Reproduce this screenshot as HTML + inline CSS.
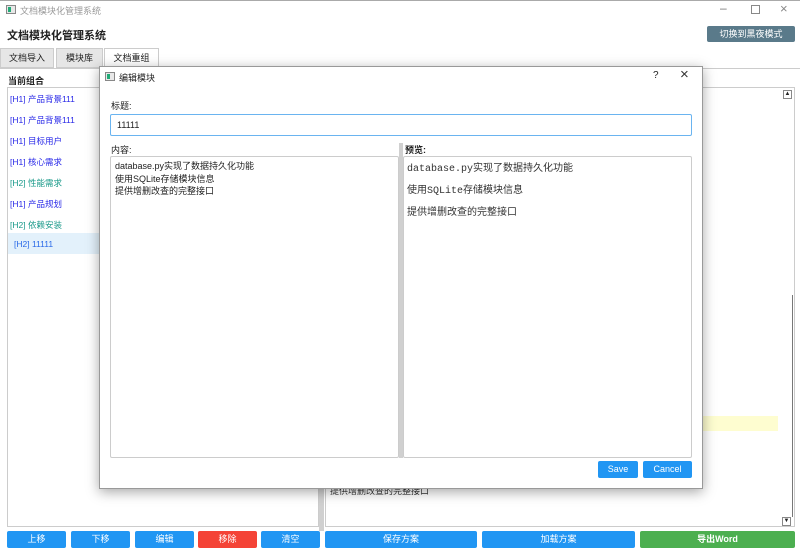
<html><head><style>
*{box-sizing:border-box;margin:0;padding:0}
body{width:800px;height:553px;background:#f0f0f0;font-family:"Liberation Sans","Noto Sans CJK SC",sans-serif;font-size:9px;position:relative;overflow:hidden;color:#222}
.a{position:absolute}
.btn{position:absolute;top:531px;height:17px;color:#fff;font-size:9px;text-align:center;line-height:17px;border-radius:2px;background:#2196f3}
.tab{position:absolute;top:48px;height:20px;border:1px solid #ccc;background:#e6e6e6;font-size:9px;text-align:center;line-height:19px}
.li{position:absolute;left:10px;font-size:8.5px}
</style></head><body>
<div class="a" style="left:0;top:0;width:800px;height:20px;background:#fff;border-top:1px solid #aaa"></div>
<div class="a" style="left:6px;top:5px;width:10px;height:9px;border:1px solid #888;background:#e8e8e8"><div style="width:3px;height:5px;background:#2a7;margin:1px"></div></div>
<div class="a" style="left:20px;top:4px;color:#999;font-size:9px">文档模块化管理系统</div>
<div class="a" style="left:720px;top:1px;color:#777;font-size:12px">&#8211;</div>
<div class="a" style="left:751px;top:5px;width:9px;height:9px;border:1px solid #888"></div>
<div class="a" style="left:780px;top:1px;color:#888;font-size:13px">&#215;</div>
<div class="a" style="left:0;top:20px;width:800px;height:48px;background:#fff"></div>
<div class="a" style="left:7px;top:27px;font-size:11px;font-weight:bold">文档模块化管理系统</div>
<div class="a" style="left:707px;top:26px;width:88px;height:16px;background:#5a7a8a;color:#fff;border-radius:2px;text-align:center;line-height:16px;font-size:9px">切换到黑夜模式</div>
<div class="tab" style="left:0;width:54px">文档导入</div>
<div class="tab" style="left:56px;width:47px">模块库</div>
<div class="tab" style="left:104px;width:55px;background:#fff;border-bottom:none">文档重组</div>
<div class="a" style="left:0;top:68px;width:800px;height:485px;background:#fff;border-top:1px solid #ccc"></div>
<div class="a" style="left:8px;top:74px;font-size:9px;font-weight:bold">当前组合</div>
<div class="a" style="left:7px;top:87px;width:312px;height:440px;border:1px solid #ccc;background:#fff"></div>
<div class="li" style="top:93px;color:#2a2ae8">[H1] 产品背景111</div>
<div class="li" style="top:114px;color:#2a2ae8">[H1] 产品背景111</div>
<div class="li" style="top:135px;color:#2a2ae8">[H1] 目标用户</div>
<div class="li" style="top:156px;color:#2a2ae8">[H1] 核心需求</div>
<div class="li" style="top:177px;color:#1a9a8a">[H2] 性能需求</div>
<div class="li" style="top:198px;color:#2a2ae8">[H1] 产品规划</div>
<div class="li" style="top:219px;color:#1a9a8a">[H2] 依赖安装</div>
<div class="a" style="left:8px;top:233px;width:310px;height:21px;background:#e3f1fb"></div>
<div class="li" style="left:14px;top:239px;color:#2a6ae8">[H2] 11111</div>
<div class="a" style="left:319px;top:87px;width:5px;height:444px;background:#d0d0d0"></div>
<div class="a" style="left:325px;top:87px;width:470px;height:440px;border:1px solid #ccc;background:#fff"></div>
<div class="a" style="left:783px;top:90px;width:9px;height:9px;border:1px solid #888;font-size:6px;text-align:center;line-height:7px">▲</div>
<div class="a" style="left:792px;top:295px;width:1px;height:222px;background:#777"></div>
<div class="a" style="left:782px;top:517px;width:9px;height:9px;border:1px solid #888;font-size:6px;text-align:center;line-height:7px">▼</div>
<div class="a" style="left:700px;top:416px;width:78px;height:15px;background:#fefdd0"></div>
<div class="a" style="left:330px;top:484px;font-size:9px;color:#333">提供增删改查的完整接口</div>
<div class="btn" style="left:7px;width:59px">上移</div>
<div class="btn" style="left:71px;width:59px">下移</div>
<div class="btn" style="left:135px;width:59px">编辑</div>
<div class="btn" style="left:198px;width:59px;background:#f44336">移除</div>
<div class="btn" style="left:261px;width:59px">清空</div>
<div class="btn" style="left:325px;width:152px">保存方案</div>
<div class="btn" style="left:482px;width:153px">加载方案</div>
<div class="btn" style="left:640px;width:155px;background:#4caf50;font-weight:bold">导出Word</div>
<!-- dialog -->
<div class="a" style="left:99px;top:66px;width:604px;height:423px;background:#fff;border:1px solid #999;box-shadow:0 3px 12px rgba(0,0,0,.35)"></div>
<div class="a" style="left:105px;top:72px;width:10px;height:9px;border:1px solid #888;background:#e8e8e8"><div style="width:3px;height:5px;background:#2a7;margin:1px"></div></div>
<div class="a" style="left:119px;top:71px;font-size:9px">编辑模块</div>
<div class="a" style="left:653px;top:70px;font-size:10px">?</div>
<div class="a" style="left:680px;top:66px;font-size:15px;color:#333">&#215;</div>
<div class="a" style="left:111px;top:99px;font-size:9px">标题:</div>
<div class="a" style="left:110px;top:114px;width:582px;height:22px;border:1px solid #6ab4f0;border-radius:2px;padding-left:6px;line-height:20px;font-size:9px">11111</div>
<div class="a" style="left:111px;top:143px;font-size:9px">内容:</div>
<div class="a" style="left:110px;top:156px;width:289px;height:302px;border:1px solid #ccc;border-radius:2px;padding:3px 4px;font-size:9px;line-height:12.5px">database.py实现了数据持久化功能<br>使用SQLite存储模块信息<br>提供增删改查的完整接口</div>
<div class="a" style="left:399px;top:143px;width:4px;height:315px;background:#d0d0d0"></div>
<div class="a" style="left:405px;top:143px;font-size:9px;font-weight:bold">预览:</div>
<div class="a" style="left:403px;top:156px;width:289px;height:302px;border:1px solid #ccc;border-radius:2px;padding:2px 3px;font-family:'Liberation Mono','Noto Sans CJK SC',monospace;font-size:10px;line-height:22px;color:#333">database.py实现了数据持久化功能<br>使用SQLite存储模块信息<br>提供增删改查的完整接口</div>
<div class="a" style="left:598px;top:461px;width:40px;height:17px;background:#2196f3;color:#fff;border-radius:2px;text-align:center;line-height:17px;font-size:9px">Save</div>
<div class="a" style="left:643px;top:461px;width:49px;height:17px;background:#2196f3;color:#fff;border-radius:2px;text-align:center;line-height:17px;font-size:9px">Cancel</div>
</body></html>
